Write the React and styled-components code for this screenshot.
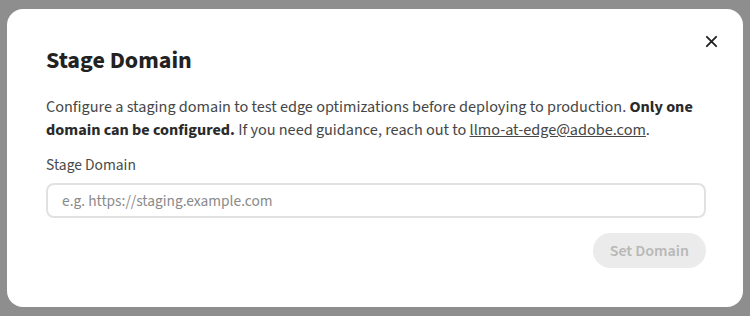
import styled, { createGlobalStyle } from "styled-components";

const GlobalStyle = createGlobalStyle`
  html, body {
    margin: 0;
    padding: 0;
    background: #8e8e8e;
    font-family: "Source Sans 3", "Lato", "Noto Sans", sans-serif;
  }
`;

const Backdrop = styled.div`
  width: 750px;
  height: 316px;
  box-sizing: border-box;
  padding: 9px 7px 9px 7px;
  display: flex;
`;

const Dialog = styled.div`
  position: relative;
  flex: 1;
  background: #fff;
  border-radius: 16px;
  padding: 38px 37px 0 39px;
  box-sizing: border-box;
  display: flex;
  flex-direction: column;
`;

const Close = styled.button`
  position: absolute;
  top: 20px;
  right: 20px;
  width: 24px;
  height: 24px;
  border: none;
  background: none;
  padding: 0;
  display: flex;
  align-items: center;
  justify-content: center;
  cursor: pointer;
`;

const Title = styled.h2`
  margin: 0;
  font-size: 24px;
  font-weight: 700;
  color: #222;
  line-height: 28px;
`;

const Body = styled.p`
  margin: 20px 0 0 0;
  font-size: 16.2px;
  line-height: 23px;
  color: #464646;
  b {
    font-weight: 700;
    color: #2a2a2a;
  }
  a {
    color: #464646;
    text-decoration: underline;
  }
`;

const Label = styled.label`
  margin-top: 14px;
  font-size: 15.5px;
  line-height: 20px;
  color: #4a4a4a;
`;

const Input = styled.input`
  margin-top: 8px;
  height: 35px;
  box-sizing: border-box;
  border: 2px solid #e1e1e1;
  border-radius: 8px;
  padding: 0 14px;
  font-family: inherit;
  font-size: 15.4px;
  color: #333;
  &::placeholder {
    color: #8a8a8a;
  }
  outline: none;
`;

const Actions = styled.div`
  display: flex;
  justify-content: flex-end;
  margin-top: 15px;
`;

const Button = styled.button`
  height: 35px;
  padding: 0 17px;
  border: none;
  border-radius: 18px;
  background: #ebebeb;
  color: #b8b8b8;
  font-family: inherit;
  font-size: 16px;
  font-weight: 600;
`;

export default function App() {
  return (
    <>
      <GlobalStyle />
      <Backdrop>
        <Dialog>
          <Close aria-label="Close">
            <svg width="13" height="13" viewBox="0 0 14 14">
              <path d="M2 2 L12 12 M12 2 L2 12" stroke="#222" strokeWidth="2" strokeLinecap="round" />
            </svg>
          </Close>
          <Title>Stage Domain</Title>
          <Body>
            Configure a staging domain to test edge optimizations before deploying to production.{" "}
            <b>Only one domain can be configured.</b> If you need guidance, reach out to{" "}
            <a href="#">llmo-at-edge@adobe.com</a>.
          </Body>
          <Label>Stage Domain</Label>
          <Input placeholder="e.g. https://staging.example.com" />
          <Actions>
            <Button disabled>Set Domain</Button>
          </Actions>
        </Dialog>
      </Backdrop>
    </>
  );
}
